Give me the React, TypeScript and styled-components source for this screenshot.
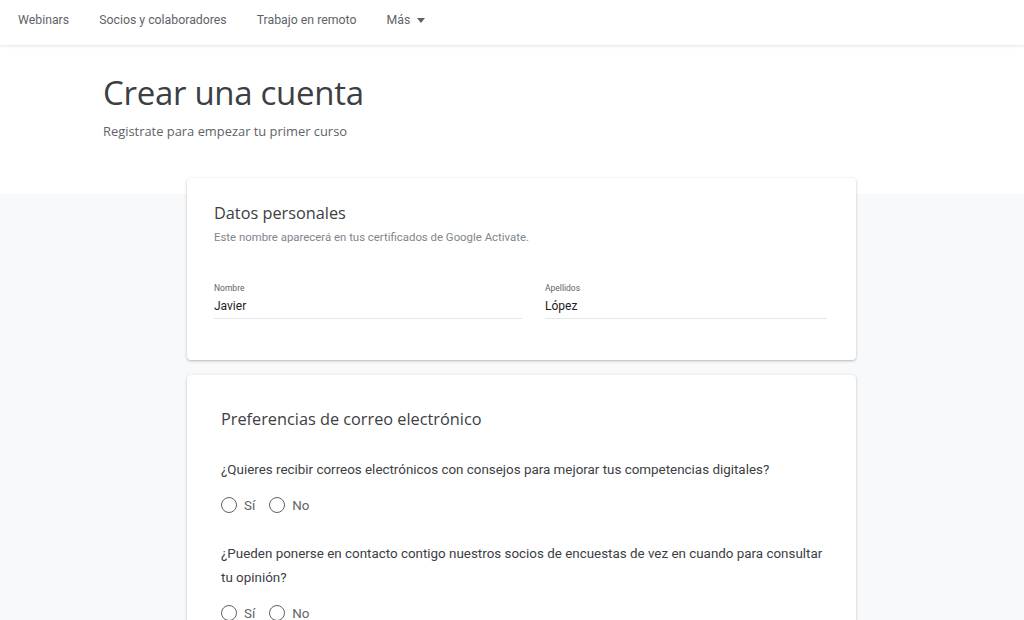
import React from "react";
import styled, { createGlobalStyle } from "styled-components";

const Global = createGlobalStyle`
  html, body { margin: 0; padding: 0; background: #f8f9fa; }
  body { font-family: Roboto, "Liberation Sans", sans-serif; color: #3c4043; }
  * { box-sizing: border-box; }
`;

const Page = styled.div`
  min-height: 620px;
  background: #f8f9fa;
`;

const NavBar = styled.nav`
  height: 45px;
  background: #fff;
  display: flex;
  align-items: center;
  padding-left: 18px;
  gap: 30px;
  box-shadow: 0 1px 3px rgba(60, 64, 67, 0.15);
  position: relative;
  z-index: 2;
`;

const NavItem = styled.span`
  font-family: Roboto, "Liberation Sans", sans-serif;
  font-size: 12.3px;
  color: #5f6368;
  display: inline-flex;
  align-items: center;
  gap: 7px;
  margin-top: -6px;
`;

const Caret = styled.span`
  width: 0;
  height: 0;
  border-left: 4.5px solid transparent;
  border-right: 4.5px solid transparent;
  border-top: 5px solid #5f6368;
  margin-top: 1px;
`;

const Hero = styled.header`
  background: #fff;
  padding: 28px 0 0 103px;
  height: 149px;
`;

const Title = styled.h1`
  margin: 0;
  font-family: "Open Sans", "Liberation Sans", sans-serif;
  font-weight: 400;
  font-size: 33px;
  letter-spacing: -0.3px;
  line-height: 40px;
  color: #3c4043;
`;

const Subtitle = styled.p`
  margin: 9px 0 0;
  font-family: "Open Sans", "Liberation Sans", sans-serif;
  font-size: 12.9px;
  color: #5f6368;
`;

const Column = styled.main`
  width: 669px;
  margin: -16px 0 0 187px;
  display: flex;
  flex-direction: column;
  gap: 15px;
  position: relative;
`;

const Card = styled.section<{ $pad: string }>`
  background: #fff;
  border-radius: 4px;
  box-shadow: 0 1px 2px rgba(60, 64, 67, 0.25), 0 1px 3px 1px rgba(60, 64, 67, 0.08);
  padding: ${(p) => p.$pad};
`;

const CardTitle = styled.h2`
  margin: 0;
  font-family: "Open Sans", "Liberation Sans", sans-serif;
  font-weight: 400;
  font-size: 16.3px;
  line-height: 22px;
  color: #3c4043;
`;

const CardNote = styled.p`
  margin: 6px 0 0;
  font-size: 11.4px;
  color: #80868b;
`;

const Fields = styled.div`
  display: grid;
  grid-template-columns: 308px 282px;
  column-gap: 23px;
  margin-top: 38px;
`;

const Field = styled.label`
  display: flex;
  flex-direction: column;
  border-bottom: 1px solid #e6e7e8;
  padding-bottom: 4px;
`;

const FieldLabel = styled.span`
  font-size: 8.5px;
  color: #5f6368;
  line-height: 12px;
`;

const FieldValue = styled.span`
  font-size: 12px;
  color: #202124;
  line-height: 16px;
  margin-top: 4px;
`;

const Question = styled.p<{ $top: number }>`
  margin: ${(p) => p.$top}px 0 0;
  font-size: 13.4px;
  line-height: 24px;
  color: #3c4043;
  max-width: 612px;
`;

const RadioRow = styled.div`
  display: flex;
  align-items: center;
  gap: 14px;
  margin-top: 15px;
`;

const RadioOption = styled.span`
  display: inline-flex;
  align-items: center;
  gap: 7px;
  font-size: 13.4px;
  color: #5f6368;
`;

const Circle = styled.span`
  width: 16px;
  height: 16px;
  border-radius: 50%;
  border: 1.6px solid #5f6368;
`;

const Radio = ({ label }: { label: string }) => (
  <RadioOption>
    <Circle />
    {label}
  </RadioOption>
);

export default function App() {
  return (
    <Page>
      <Global />
      <NavBar>
        <NavItem>Webinars</NavItem>
        <NavItem>Socios y colaboradores</NavItem>
        <NavItem>Trabajo en remoto</NavItem>
        <NavItem>
          Más <Caret />
        </NavItem>
      </NavBar>
      <Hero>
        <Title>Crear una cuenta</Title>
        <Subtitle>Registrate para empezar tu primer curso</Subtitle>
      </Hero>
      <Column>
        <Card $pad="24px 29px 41px 27px">
          <CardTitle>Datos personales</CardTitle>
          <CardNote>Este nombre aparecerá en tus certificados de Google Activate.</CardNote>
          <Fields>
            <Field>
              <FieldLabel>Nombre</FieldLabel>
              <FieldValue>Javier</FieldValue>
            </Field>
            <Field>
              <FieldLabel>Apellidos</FieldLabel>
              <FieldValue>López</FieldValue>
            </Field>
          </Fields>
        </Card>
        <Card $pad="33px 20px 30px 34px">
          <CardTitle>Preferencias de correo electrónico</CardTitle>
          <Question $top={28}>
            ¿Quieres recibir correos electrónicos con consejos para mejorar tus competencias digitales?
          </Question>
          <RadioRow>
            <Radio label="Sí" />
            <Radio label="No" />
          </RadioRow>
          <Question $top={29}>
            ¿Pueden ponerse en contacto contigo nuestros socios de encuestas de vez en cuando para consultar tu opinión?
          </Question>
          <RadioRow>
            <Radio label="Sí" />
            <Radio label="No" />
          </RadioRow>
        </Card>
      </Column>
    </Page>
  );
}
